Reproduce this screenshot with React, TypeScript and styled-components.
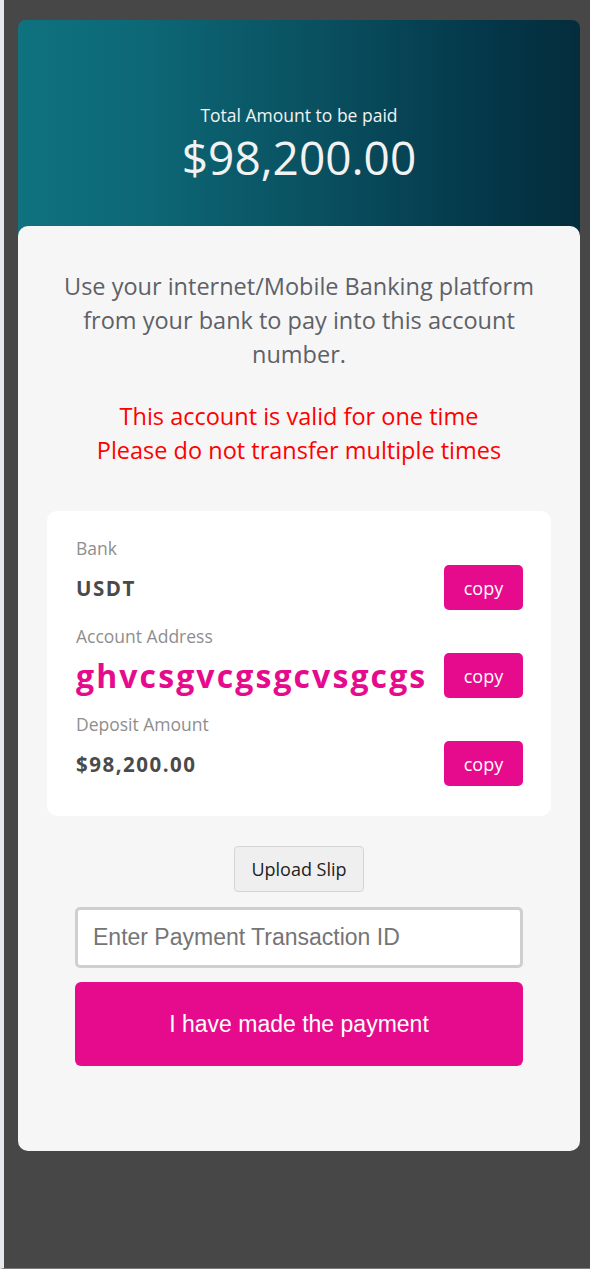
import React from "react";
import styled, { createGlobalStyle } from "styled-components";

const GlobalStyle = createGlobalStyle`
  html, body { margin: 0; padding: 0; }
  body {
    background: #474747;
    font-family: "Open Sans", "Noto Sans", sans-serif;
  }
`;

const Page = styled.div`
  min-height: 1269px;
  box-sizing: border-box;
  background: #474747;
  border-left: 4px solid #e6eaee;
  border-bottom: 1px solid #7a7a7a;
  padding: 20px 10px 0 14px;
`;

const Card = styled.div`
  width: 562px;
`;

const Header = styled.div`
  height: 216px;
  box-sizing: border-box;
  border-radius: 8px 8px 0 0;
  background: linear-gradient(to right, #0f727f 0%, #0d6977 20%, #094f5f 55%, #033648 85%, #052d3c 100%);
  padding-top: 83px;
  text-align: center;
  color: #f2f2f2;
`;

const HeaderTitle = styled.div`
  font-size: 17.5px;
  line-height: 24px;
`;

const HeaderAmount = styled.div`
  font-size: 46px;
  line-height: 56px;
  margin-top: 2px;
`;

const Body = styled.div`
  margin-top: -10px;
  position: relative;
  background: #f6f6f6;
  border-radius: 10px;
  padding: 43px 29px 85px;
  display: flex;
  flex-direction: column;
  align-items: center;
`;

const Instruction = styled.p`
  margin: 0;
  font-size: 23.5px;
  line-height: 34px;
  color: #5e6166;
  text-align: center;
`;

const Warning = styled.p`
  margin: 28px 0 0;
  font-size: 23.5px;
  line-height: 34px;
  color: #ff0000;
  text-align: center;
`;

const DetailsCard = styled.div`
  align-self: stretch;
  margin-top: 44px;
  background: #ffffff;
  border-radius: 10px;
  padding: 25px 28px 30px 29px;
  display: flex;
  flex-direction: column;
  gap: 14px;
`;

const Field = styled.div`
  display: flex;
  flex-direction: column;
  gap: 5px;
`;

const Label = styled.div`
  font-size: 17.5px;
  line-height: 24px;
  color: #8e8e8e;
`;

const ValueRow = styled.div`
  display: flex;
  align-items: center;
  justify-content: space-between;
  height: 45px;
`;

const Value = styled.div<{ $accent?: boolean }>`
  font-weight: 700;
  font-size: ${(p) => (p.$accent ? "32px" : "20.5px")};
  letter-spacing: ${(p) => (p.$accent ? "2.1px" : "1.5px")};
  color: ${(p) => (p.$accent ? "#e60b8c" : "#4a4a4a")};
  white-space: nowrap;
`;

const CopyButton = styled.button`
  width: 79px;
  height: 45px;
  flex-shrink: 0;
  border: none;
  border-radius: 5px;
  background: #e60b8c;
  color: #ffffff;
  font-family: "Open Sans", "Noto Sans", sans-serif;
  font-size: 18px;
  padding: 0;
`;

const UploadButton = styled.button`
  margin-top: 30px;
  width: 130px;
  height: 46px;
  background: #efefef;
  border: 1px solid #d4d4d4;
  border-radius: 4px;
  font-family: "Open Sans", "Noto Sans", sans-serif;
  font-size: 18px;
  color: #222;
  padding: 0;
`;

const TxInput = styled.input`
  margin-top: 15px;
  width: 448px;
  height: 61px;
  box-sizing: border-box;
  border: 3px solid #cfcfcf;
  border-radius: 5px;
  background: #fff;
  padding: 0 15px;
  font-family: "Liberation Sans", Arial, sans-serif;
  font-size: 23px;
  color: #333;
  &::placeholder { color: #757575; }
`;

const SubmitButton = styled.button`
  margin-top: 14px;
  width: 448px;
  height: 84px;
  border: none;
  border-radius: 6px;
  background: #e60b8c;
  color: #ffffff;
  font-family: "Liberation Sans", Arial, sans-serif;
  font-size: 23px;
`;

const fields = [
  { label: "Bank", value: "USDT" },
  { label: "Account Address", value: "ghvcsgvcgsgcvsgcgs", accent: true },
  { label: "Deposit Amount", value: "$98,200.00" },
];

export default function App() {
  return (
    <>
      <GlobalStyle />
      <Page>
        <Card>
          <Header>
            <HeaderTitle>Total Amount to be paid</HeaderTitle>
            <HeaderAmount>$98,200.00</HeaderAmount>
          </Header>
          <Body>
            <Instruction>
              Use your internet/Mobile Banking platform from your bank to pay into this account number.
            </Instruction>
            <Warning>
              This account is valid for one time
              <br />
              Please do not transfer multiple times
            </Warning>
            <DetailsCard>
              {fields.map((f) => (
                <Field key={f.label}>
                  <Label>{f.label}</Label>
                  <ValueRow>
                    <Value $accent={f.accent}>{f.value}</Value>
                    <CopyButton>copy</CopyButton>
                  </ValueRow>
                </Field>
              ))}
            </DetailsCard>
            <UploadButton>Upload Slip</UploadButton>
            <TxInput placeholder="Enter Payment Transaction ID" />
            <SubmitButton>I have made the payment</SubmitButton>
          </Body>
        </Card>
      </Page>
    </>
  );
}
